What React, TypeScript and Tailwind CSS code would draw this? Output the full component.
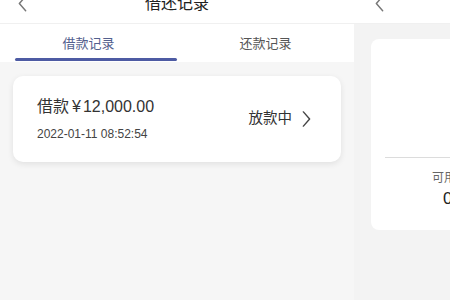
import React from "react";

const Chevron = ({ dir, className }: { dir: "left" | "right"; className?: string }) => (
  <svg viewBox="0 0 10 18" className={className} fill="none" stroke="currentColor" strokeWidth="1.6" strokeLinecap="round" strokeLinejoin="round">
    {dir === "left" ? <path d="M8.5 1 L1.5 9 L8.5 17" /> : <path d="M1.5 1 L8.5 9 L1.5 17" />}
  </svg>
);

export default function App() {
  return (
    <div
      className="w-[450px] h-[300px] overflow-hidden flex bg-[#f3f3f3]"
      style={{ fontFamily: '"Liberation Sans", "Noto Sans CJK SC", sans-serif' }}
    >
      {/* Left phone */}
      <div className="w-[354px] shrink-0 flex flex-col bg-[#f6f6f6]">
        <div className="h-[24px] bg-white border-b border-[#f0f0f0] flex items-start overflow-hidden relative">
          <div className="w-[40px] pl-[18px] -mt-[5px]">
            <Chevron dir="left" className="w-[9px] h-[17px] text-[#777]" />
          </div>
          <div className="flex-1 flex justify-center -mt-[6px] pr-[40px]">
            <span className="text-[16px] leading-[20px] text-[#222]">借还记录</span>
          </div>
        </div>
        <div className="h-[38px] bg-white flex">
          <div className="w-[177px] flex flex-col items-center">
            <span className="mt-[12px] text-[13px] leading-[16px] text-[#53608e]">借款记录</span>
            <div className="mt-auto ml-[15px] self-stretch h-[3px] bg-[#4d5ba3] rounded-full mb-[1px]" />
          </div>
          <div className="flex-1 flex flex-col items-center">
            <span className="mt-[12px] text-[13px] leading-[16px] text-[#555]">还款记录</span>
          </div>
        </div>
        <div className="mx-[13px] mt-[14px] h-[86px] bg-white rounded-[10px] shadow-[0_2px_6px_rgba(0,0,0,0.09)] flex items-center pl-[24px] pr-[30px]">
          <div className="flex flex-col">
            <div className="text-[16px] leading-[20px] text-[#333] flex items-center">
              <span>借款</span>
              <span className="ml-[3px]">¥</span>
              <span className="ml-[2px]">12,000.00</span>
            </div>
            <div className="mt-[10px] text-[12px] leading-[15px] text-[#444]">2022-01-11 08:52:54</div>
          </div>
          <div className="ml-auto flex items-center gap-[10px]">
            <span className="text-[14.5px] text-[#333]">放款中</span>
            <Chevron dir="right" className="w-[9px] h-[16px] text-[#444]" />
          </div>
        </div>
      </div>
      {/* Right phone */}
      <div className="flex-1 flex flex-col pl-[3px]">
        <div className="h-[24px] bg-white border-b border-[#f0f0f0] overflow-hidden -ml-[3px]">
          <div className="pl-[21px] -mt-[5px]">
            <Chevron dir="left" className="w-[9px] h-[17px] text-[#777]" />
          </div>
        </div>
        <div className="ml-[14px] mt-[15px] h-[191px] bg-white rounded-l-[8px] flex flex-col">
          <div className="mt-[118px] ml-[14px] h-px bg-[#dcdcdc]" />
          <div className="mt-[13px] pl-[61px] text-[12px] leading-[14px] text-[#666] whitespace-nowrap">可用</div>
          <div className="mt-[4px] pl-[72px] text-[17px] leading-[20px] text-[#222]">0</div>
        </div>
      </div>
    </div>
  );
}
